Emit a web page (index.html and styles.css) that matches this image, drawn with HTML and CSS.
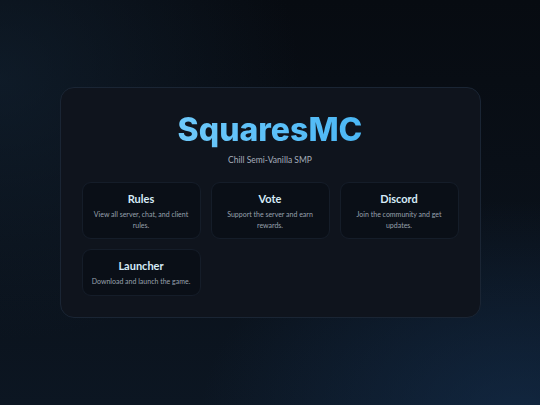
FILE: index.html
```html
<!DOCTYPE html>
<html>
<head>
<meta charset="utf-8">
<link rel="stylesheet" href="styles.css">
</head>
<body>
<main class="page">
  <section class="panel">
    <h1 class="title">SquaresMC</h1>
    <p class="subtitle">Chill Semi-Vanilla SMP</p>
    <div class="grid">
      <a class="card card-tall">
        <h2 class="card-title">Rules</h2>
        <p class="card-desc">View all server, chat, and client rules.</p>
      </a>
      <a class="card card-tall">
        <h2 class="card-title">Vote</h2>
        <p class="card-desc">Support the server and earn rewards.</p>
      </a>
      <a class="card card-tall">
        <h2 class="card-title">Discord</h2>
        <p class="card-desc">Join the community and get updates.</p>
      </a>
      <a class="card">
        <h2 class="card-title">Launcher</h2>
        <p class="card-desc">Download and launch the game.</p>
      </a>
    </div>
  </section>
</main>
</body>
</html>
```
FILE: styles.css
```css
* { box-sizing: border-box; }
html, body { margin: 0; padding: 0; }
body {
  width: 540px;
  height: 405px;
  overflow: hidden;
  font-family: "Lato", "Noto Sans", sans-serif;
  background:
    radial-gradient(ellipse 320px 220px at 520px 420px, rgba(22,52,88,0.55), rgba(22,52,88,0) 100%),
    radial-gradient(ellipse 300px 260px at 0px 80px, rgba(20,38,56,0.55), rgba(20,38,56,0) 100%),
    linear-gradient(180deg, #070b11 0%, #0a111a 60%, #0c1622 100%);
}
.page {
  height: 405px;
  display: flex;
  align-items: center;
  justify-content: center;
}
.panel {
  width: 421px;
  height: 231px;
  padding: 21px;
  border-radius: 14px;
  background: #0f141d;
  border: 1px solid #1a2534;
  text-align: center;
}
.title {
  margin: 0;
  font-family: "Inter", "Lato", sans-serif;
  font-size: 32px;
  font-weight: 800;
  line-height: 42px;
  letter-spacing: 0;
  background: linear-gradient(90deg, #80d1fb 0%, #5cc0f8 50%, #3aaef0 100%);
  -webkit-background-clip: text;
  background-clip: text;
  color: transparent;
}
.subtitle {
  margin: 3px 0 0;
  font-size: 8.5px;
  line-height: 12px;
  color: #a6aebb;
}
.grid {
  margin-top: 16px;
  display: grid;
  grid-template-columns: repeat(3, 1fr);
  gap: 10px;
}
.card {
  display: block;
  height: 47px;
  padding: 9px 6px 0;
  border-radius: 9px;
  background: #0a0f17;
  border: 1px solid #151d29;
}
.card-tall { height: 57px; }
.card-title {
  margin: 0;
  font-size: 11px;
  font-weight: 700;
  line-height: 14px;
  color: #d6ebf8;
}
.card-desc {
  margin: 3px 0 0;
  font-size: 7px;
  line-height: 10.5px;
  color: #98a1ad;
}
```
